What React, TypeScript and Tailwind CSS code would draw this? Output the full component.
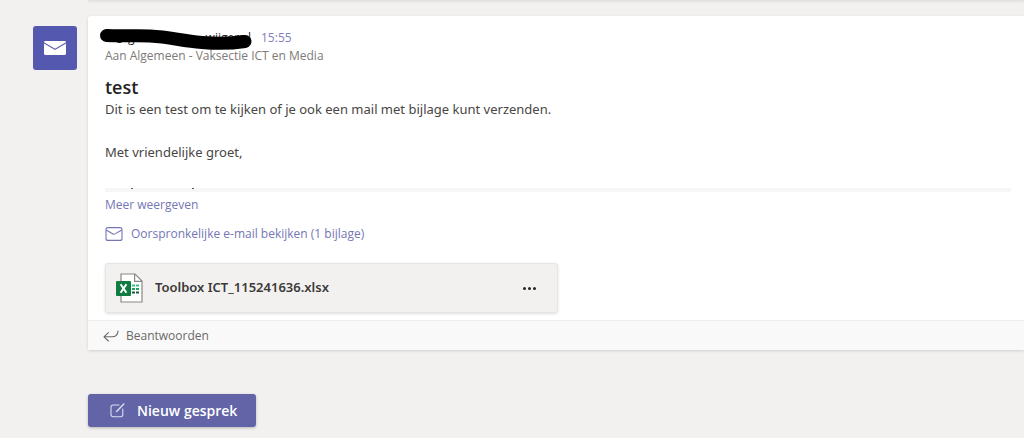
import { ReactNode } from "react"

// Types
interface IconProps {
  className?: string
}

interface PostProps {
  time: string
  recipient: string
  subject: string
  children: ReactNode
}

// Icons
function MailSolidIcon({ className }: IconProps) {
  return (
    <svg className={className} viewBox="0 0 22 14" fill="#fff" aria-hidden="true">
      <path d="M0 1.2Q0 0 1.2 0H20.8Q22 0 22 1.2L11.8 7.2Q11 7.6 10.2 7.2Z" />
      <path d="M0 2.6L10.2 8.6Q11 9 11.8 8.6L22 2.6V12.4Q22 14 20.4 14H1.6Q0 14 0 12.4Z" />
    </svg>
  )
}

function MailIcon({ className }: IconProps) {
  return (
    <svg className={className} viewBox="0 0 18 14" fill="none" stroke="currentColor" strokeWidth="1.1" aria-hidden="true">
      <rect x="1" y="0.6" width="16" height="12.8" rx="2" />
      <path d="M1.2 3L8 6.9Q9 7.5 10 6.9L16.8 3" />
    </svg>
  )
}

function ExcelIcon({ className }: IconProps) {
  return (
    <svg className={className} viewBox="0 0 27 30" aria-hidden="true">
      <path d="M5 1H19L26 8V29H5Z" fill="#fff" stroke="#8a8886" strokeWidth="1.2" />
      <path d="M18.6 1V8.4H26" fill="none" stroke="#8a8886" strokeWidth="1.2" />
      <g strokeWidth="2">
        <path d="M16 12.6h3M20 12.6h3" stroke="#33c481" />
        <path d="M16 16h3M20 16h3" stroke="#21a366" />
        <path d="M16 19.4h3M20 19.4h3" stroke="#185c37" />
      </g>
      <rect y="8" width="15" height="15" rx="1" fill="#107c41" />
      <path d="M4.6 11.3L10.4 19.7M10.4 11.3L4.6 19.7" stroke="#fff" strokeWidth="2" />
    </svg>
  )
}

function ReplyIcon({ className }: IconProps) {
  return (
    <svg className={className} viewBox="0 0 16 12" fill="none" stroke="currentColor" strokeWidth="1.1" strokeLinecap="round" strokeLinejoin="round" aria-hidden="true">
      <path d="M15 1Q14.6 6.8 9 6.8H1M5.4 2.6L1 6.8L5.4 11" />
    </svg>
  )
}

function ComposeIcon({ className }: IconProps) {
  return (
    <svg className={className} viewBox="0 0 15 15" fill="none" stroke="currentColor" strokeWidth="1.1" strokeLinecap="round" aria-hidden="true">
      <path d="M9 2H3.2Q1 2 1 4.2V11.6Q1 13.8 3.2 13.8H10.6Q12.8 13.8 12.8 11.6V6" />
      <path d="M6.6 8.4L13.8 1" strokeWidth="1.5" />
    </svg>
  )
}

// Sender address, struck out with a thick marker
function HiddenSender() {
  return (
    <div className="relative flex h-5 w-[146px] justify-between text-xs leading-5 text-[#252423]">
      <span>vi@ g</span>
      <span>wijgers.l</span>
      <svg className="absolute -top-1 -left-[6px] h-7 w-[156px]" viewBox="0 0 156 28" fill="none" stroke="#000" strokeLinecap="round" role="img" aria-label="Afzender verborgen">
        <path d="M7.500 11.500C24 12.500 36 11 51 12C72 13 82 17 103 18.500C119 20 133 19.500 146 17.500" strokeWidth="13" />
      </svg>
    </div>
  )
}

function Post({ time, recipient, subject, children }: PostProps) {
  return (
    <article className="min-w-0 flex-1 rounded-l-[3px] bg-white shadow-[0_1px_3px_rgba(0,0,0,0.14)]">
      <div className="pt-3 pr-[13px] pb-[7px] pl-[17px]">
        <div className="flex items-center gap-[10px]">
          <HiddenSender />
          <time className="text-xs text-[#7f80bd]">{time}</time>
        </div>
        <p className="text-xs leading-4 text-[#7c7a78]">{recipient}</p>
        <h2 className="mt-[11px] text-lg leading-6 font-semibold text-[#252423]">{subject}</h2>
        {children}
      </div>

      <footer className="border-t border-[#eeeded] bg-[#f9f9f9] pl-[15px]">
        <button type="button" className="flex h-[29px] items-center gap-[7px] text-xs text-[#6b6968]">
          <ReplyIcon className="h-3 w-4" />
          Beantwoorden
        </button>
      </footer>
    </article>
  )
}

function Attachment({ name }: { name: string }) {
  return (
    <div className="mt-5 flex h-[50px] w-1/2 items-center rounded-[3px] border border-[#e7e5e4] bg-[#f2f1f0] pr-4 pl-[10px] shadow-[0_1px_3px_rgba(0,0,0,0.12)]">
      <ExcelIcon className="h-[30px] w-[27px] shrink-0" />
      <span className="ml-3 flex-1 truncate font-['Noto_Sans','Open_Sans',sans-serif] text-[13px] font-semibold text-[#3b3a39]">{name}</span>
      <button type="button" aria-label="Meer opties" className="flex h-6 w-6 items-center justify-center gap-[2px]">
        <span className="size-[3px] rounded-full bg-[#252423]" />
        <span className="size-[3px] rounded-full bg-[#252423]" />
        <span className="size-[3px] rounded-full bg-[#252423]" />
      </button>
    </div>
  )
}

function App() {
  return (
    <main className="min-h-screen bg-[#f2f1f0] font-['Open_Sans','Noto_Sans',sans-serif]">

      <div className="ml-[88px] h-px bg-[#e4e2e1] shadow-[0_1px_2px_rgba(0,0,0,0.1)]" />

      <div className="flex items-start gap-[11px] pt-[15px] pl-[33px]">
        <div className="mt-[10px] flex size-11 shrink-0 items-center justify-center rounded-[3px] bg-[#5558af]">
          <MailSolidIcon className="h-[14px] w-[22px]" />
        </div>

        <Post time="15:55" recipient="Aan Algemeen - Vaksectie ICT en Media" subject="test">
          <div className="font-['Noto_Sans','Open_Sans',sans-serif] text-[13px] leading-[21px] text-[#484644]">
            <p>Dit is een test om te kijken of je ook een mail met bijlage kunt verzenden.</p>
            <p className="mt-[22px]">Met vriendelijke groet,</p>
          </div>

          {/* Collapsed part of the message */}
          <div className="mt-[25px] flex h-1 gap-[59px] bg-[#f6f6f6] pl-[26px]">
            <span className="h-px w-[2px] bg-[#605e5c]" />
            <span className="h-px w-[2px] bg-[#605e5c]" />
          </div>

          <a href="#" className="mt-1 block w-fit text-xs leading-[18px] text-[#7476b5]">Meer weergeven</a>
          <a href="#" className="mt-[11px] flex w-fit items-center gap-2 text-xs leading-[18px] text-[#7476b5]">
            <MailIcon className="h-[14px] w-[18px]" />
            Oorspronkelijke e-mail bekijken (1 bijlage)
          </a>

          <Attachment name="Toolbox ICT_115241636.xlsx" />
        </Post>
      </div>

      <button type="button" className="mt-11 ml-[88px] flex h-[33px] w-[168px] items-center gap-3 rounded-[3px] bg-[#6264a7] pl-[22px] text-sm font-semibold text-white shadow-[0_1px_3px_rgba(0,0,0,0.25)]">
        <ComposeIcon className="size-[15px] text-[#dcdcf0]" />
        Nieuw gesprek
      </button>

    </main>
  )
}

export default App
